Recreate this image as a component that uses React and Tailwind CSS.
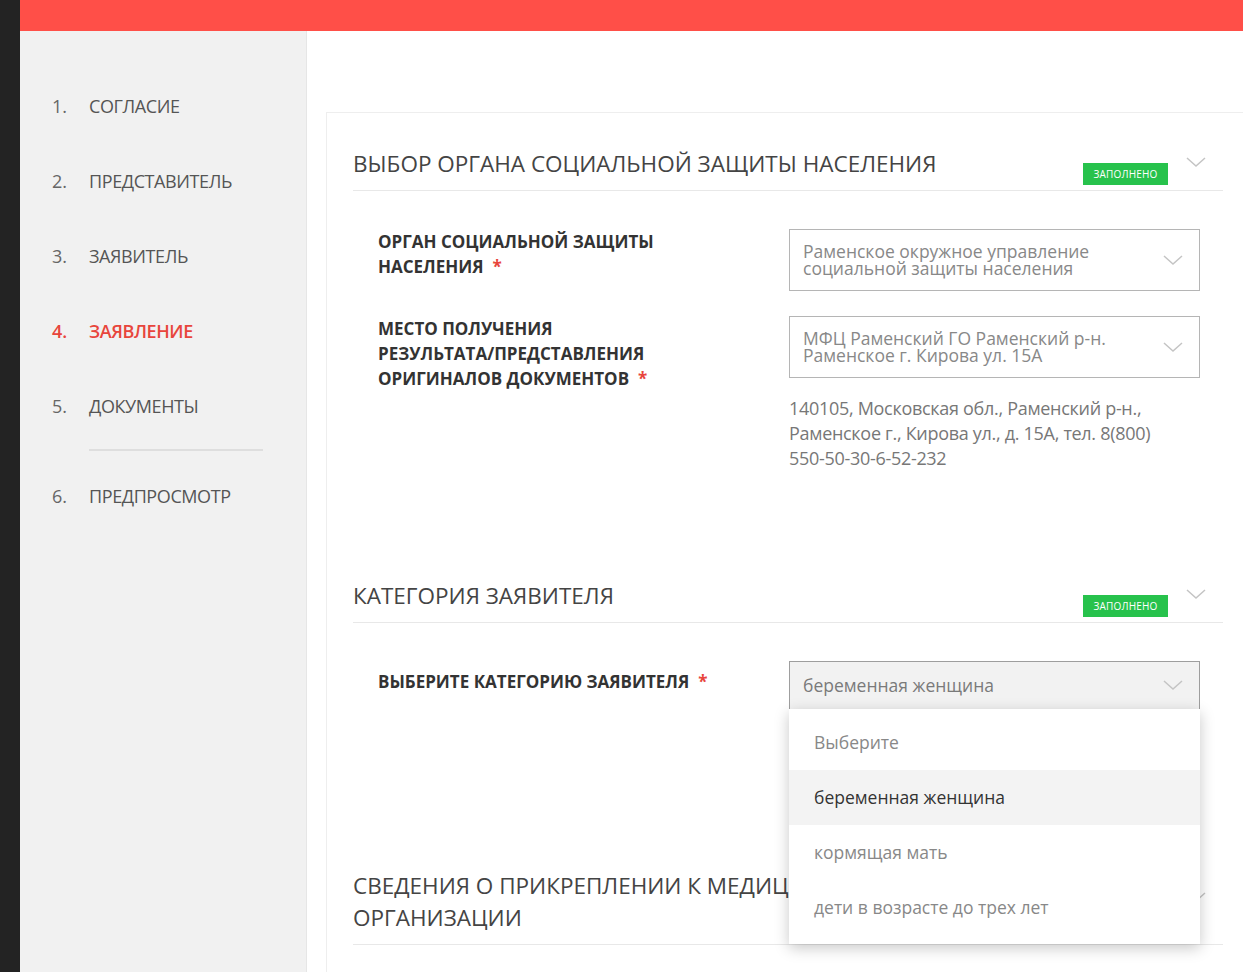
import React from "react";

const font = { fontFamily: '"Open Sans", "Noto Sans", Arial, sans-serif' };

function Chevron({ className = "" }) {
  return (
    <svg width="20" height="11" viewBox="0 0 20 11" className={className}>
      <path d="M1 1 L10 9 L19 1" fill="none" stroke="#c4c4c4" strokeWidth="1.5" />
    </svg>
  );
}

function Badge() {
  return (
    <div className="h-[22px] w-[85px] bg-[#27c24c] text-white text-[10px] leading-[22px] text-center tracking-[0.2px]">
      ЗАПОЛНЕНО
    </div>
  );
}

function SectionHeader({ children, badge = true, chevTop = "mt-[9px]" }) {
  return (
    <div className="flex justify-between items-start border-b border-[#e8e8e8]">
      <div className="w-[690px] text-[22.5px] leading-[32px] text-[#444] pb-[10px]">{children}</div>
      {badge ? (
        <div className="flex items-start">
          <div className="mt-[15px]">
            <Badge />
          </div>
          <Chevron className={`ml-[18px] mr-[17px] ${chevTop}`} />
        </div>
      ) : (
        <Chevron className={`ml-[18px] mr-[17px] ${chevTop}`} />
      )}
    </div>
  );
}

function Star() {
  return <span className="text-[#e8453c] ml-[9px]">*</span>;
}

function Label({ children }) {
  return (
    <div className="w-[436px] shrink-0 pl-[25px] text-[17px] leading-[25px] font-bold text-[#333]">
      {children}
    </div>
  );
}

function Select({ children, h = "h-[62px]", active = false }) {
  return (
    <div
      className={`w-[411px] ${h} border flex items-center justify-between pl-[13px] pr-[16px] ${
        active ? "bg-[#f2f2f2] border-[#9e9e9e]" : "bg-white border-[#b5b5b5]"
      }`}
    >
      <div className="text-[17.5px] leading-[17px] text-[#888]">{children}</div>
      <Chevron />
    </div>
  );
}

export default function App() {
  const steps = [
    ["1.", "СОГЛАСИЕ"],
    ["2.", "ПРЕДСТАВИТЕЛЬ"],
    ["3.", "ЗАЯВИТЕЛЬ"],
    ["4.", "ЗАЯВЛЕНИЕ"],
    ["5.", "ДОКУМЕНТЫ"],
  ];
  return (
    <div style={font} className="w-[1243px] h-[972px] overflow-hidden flex bg-white">
      <div className="w-[20px] h-full bg-[#232323] shrink-0" />
      <div className="flex-1 flex flex-col">
        <div className="h-[31px] bg-[#ff4f48] shrink-0" />
        <div className="flex flex-1 min-h-0">
          {/* Sidebar */}
          <div className="w-[287px] shrink-0 bg-[#f1f1f1] border-r border-[#e6e6e6] pt-[63px]">
            {steps.map(([n, t], i) => {
              const active = i === 3;
              return (
                <div
                  key={n}
                  className={`flex text-[18px] leading-[24px] ${i === 4 ? "h-[55px]" : "h-[75px]"} ${
                    active ? "text-[#e8453c] font-semibold" : "text-[#555]"
                  }`}
                >
                  <div className={`w-[69px] pl-[32px] ${active ? "" : "text-[#666]"}`}>{n}</div>
                  <div className="tracking-[-0.4px]">{t}</div>
                </div>
              );
            })}
            <div className="ml-[69px] w-[174px] h-[2px] bg-[#dedede]" />
            <div className="flex text-[18px] leading-[24px] text-[#555] mt-[33px]">
              <div className="w-[69px] pl-[32px] text-[#666]">6.</div>
              <div className="tracking-[-0.4px]">ПРЕДПРОСМОТР</div>
            </div>
          </div>

          {/* Main */}
          <div className="flex-1 pl-[19px] pt-[81px] overflow-hidden">
            <div className="border-t border-l border-[#eeeeee] pl-[26px] pr-[20px] pt-[35px] h-[900px]">
              <SectionHeader>ВЫБОР ОРГАНА СОЦИАЛЬНОЙ ЗАЩИТЫ НАСЕЛЕНИЯ</SectionHeader>

              <div className="flex mt-[38px]">
                <Label>
                  ОРГАН СОЦИАЛЬНОЙ ЗАЩИТЫ
                  <br />
                  НАСЕЛЕНИЯ
                  <Star />
                </Label>
                <Select>
                  Раменское окружное управление
                  <br />
                  социальной защиты населения
                </Select>
              </div>

              <div className="flex mt-[25px]">
                <Label>
                  МЕСТО ПОЛУЧЕНИЯ
                  <br />
                  РЕЗУЛЬТАТА/ПРЕДСТАВЛЕНИЯ
                  <br />
                  ОРИГИНАЛОВ ДОКУМЕНТОВ
                  <Star />
                </Label>
                <div>
                  <Select>
                    МФЦ Раменский ГО Раменский р-н.
                    <br />
                    Раменское г. Кирова ул. 15А
                  </Select>
                  <div className="mt-[18px] text-[18px] leading-[25px] text-[#777] tracking-[-0.3px]">
                    140105, Московская обл., Раменский р-н.,
                    <br />
                    Раменское г., Кирова ул., д. 15А, тел. 8(800)
                    <br />
                    550-50-30-6-52-232
                  </div>
                </div>
              </div>

              <div className="mt-[109px]">
                <SectionHeader>КАТЕГОРИЯ ЗАЯВИТЕЛЯ</SectionHeader>
              </div>

              <div className="flex mt-[38px] relative z-10">
                <div className="pt-[8px]">
                  <Label>
                    ВЫБЕРИТЕ КАТЕГОРИЮ ЗАЯВИТЕЛЯ
                    <Star />
                  </Label>
                </div>
                <div className="relative">
                  <Select h="h-[49px]" active>
                    <span className="text-[17.5px] text-[#7a7a7a]">беременная женщина</span>
                  </Select>
                  <div className="absolute left-0 top-[48px] w-[411px] bg-white shadow-[0_4px_14px_rgba(0,0,0,0.22)] pt-[6px] pb-[9px] text-[17.5px]">
                    <div className="h-[55px] flex items-center pl-[25px] text-[#888]">Выберите</div>
                    <div className="h-[55px] flex items-center pl-[25px] text-[#333] bg-[#f3f3f3]">
                      беременная женщина
                    </div>
                    <div className="h-[55px] flex items-center pl-[25px] text-[#888]">кормящая мать</div>
                    <div className="h-[55px] flex items-center pl-[25px] text-[#888]">
                      дети в возрасте до трех лет
                    </div>
                  </div>
                </div>
              </div>

              <div className="mt-[160px]">
                <SectionHeader badge={false} chevTop="mt-[22px]">
                  СВЕДЕНИЯ О ПРИКРЕПЛЕНИИ К МЕДИЦИНСКОЙ ОРГАНИЗАЦИИ
                </SectionHeader>
              </div>
            </div>
          </div>
        </div>
      </div>
    </div>
  );
}
